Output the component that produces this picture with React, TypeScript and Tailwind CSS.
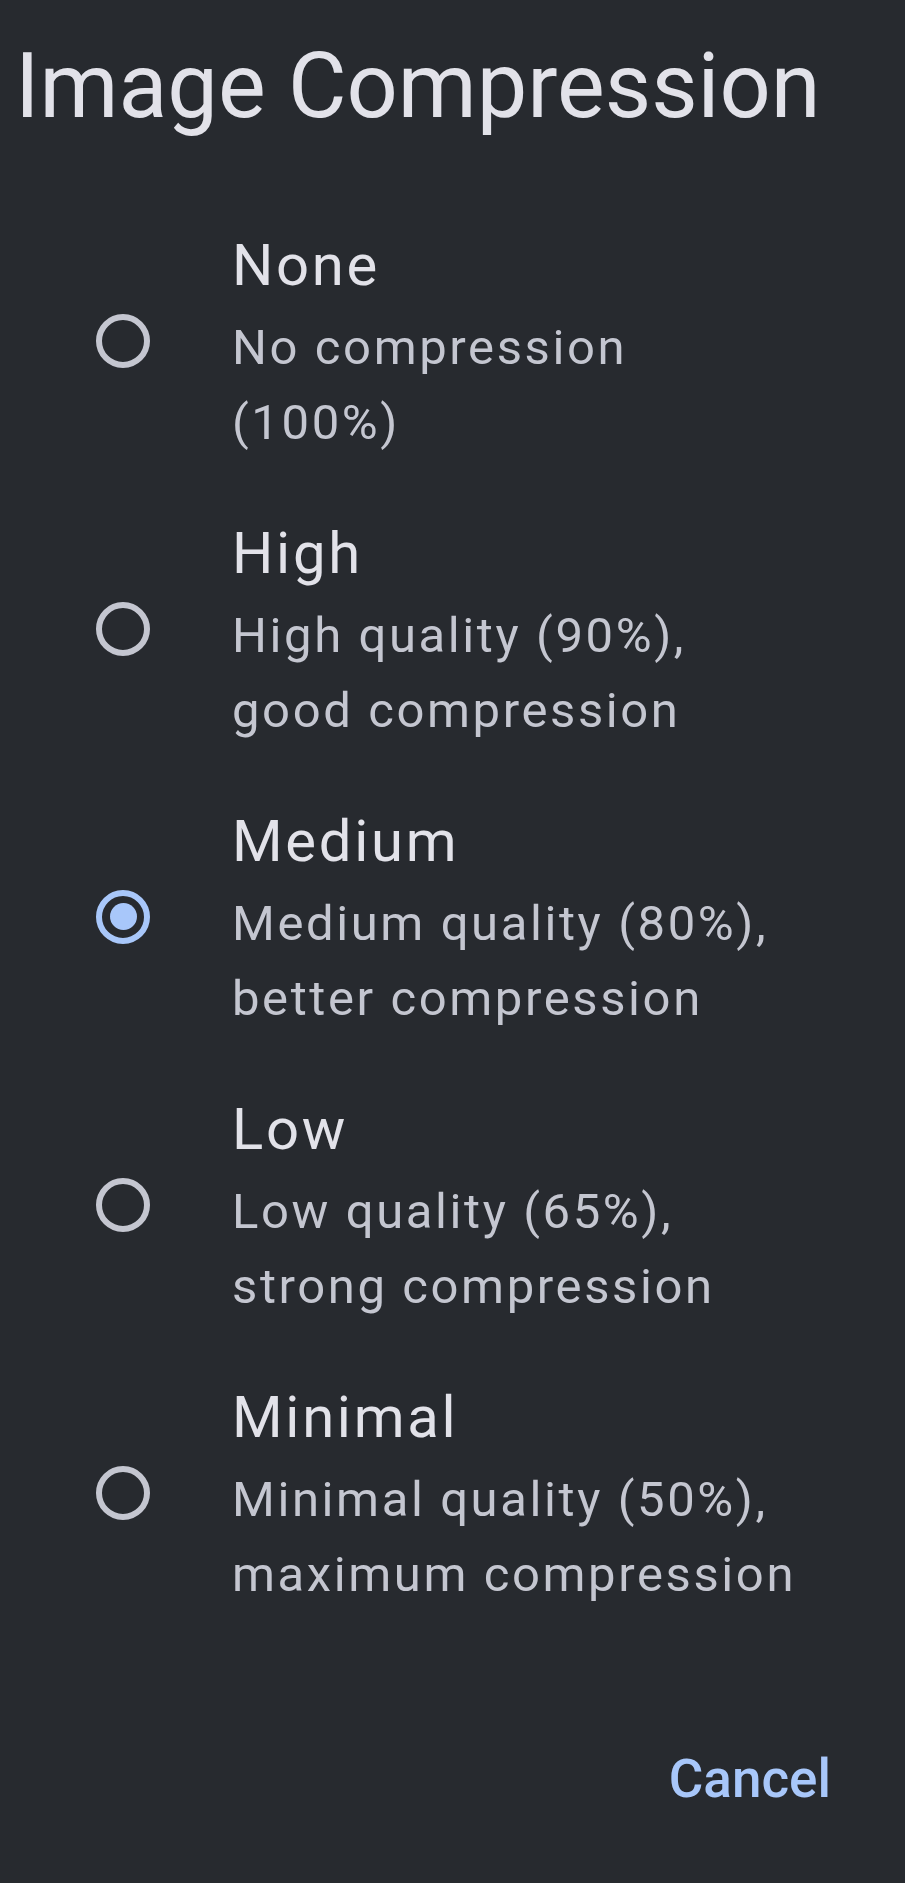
const options = [
  { label: "None", lines: ["No compression", "(100%)"] },
  { label: "High", lines: ["High quality (90%),", "good compression"] },
  { label: "Medium", lines: ["Medium quality (80%),", "better compression"] },
  { label: "Low", lines: ["Low quality (65%),", "strong compression"] },
  { label: "Minimal", lines: ["Minimal quality (50%),", "maximum compression"] },
];

function Radio({ checked }: { checked: boolean }) {
  if (checked) {
    return (
      <div className="w-[54px] h-[54px] rounded-full border-[6px] border-[#a8c7fa] flex items-center justify-center">
        <div className="w-[27px] h-[27px] rounded-full bg-[#a8c7fa]" />
      </div>
    );
  }
  return <div className="w-[54px] h-[54px] rounded-full border-[6px] border-[#c4c6d0]" />;
}

export default function App() {
  const selected = "Medium";
  return (
    <div
      className="w-[905px] h-[1883px] bg-[#272a2f] flex flex-col"
      style={{ fontFamily: "Roboto, 'Noto Sans', sans-serif" }}
    >
      <h1 className="pl-[15px] pt-[33px] text-[90px] leading-[108px] font-normal text-[#e2e2e9]">
        Image Compression
      </h1>

      <div className="mt-[80px] flex flex-col gap-[49px]">
        {options.map((o) => (
          <div key={o.label} className="flex items-center">
            <div className="w-[232px] flex justify-start pl-[96px]">
              <Radio checked={o.label === selected} />
            </div>
            <div className="flex flex-col">
              <div className="text-[58px] leading-[89px] tracking-[2.7px] text-[#e2e2e9]">{o.label}</div>
              {o.lines.map((l) => (
                <div key={l} className="text-[49px] leading-[75px] tracking-[2.6px] text-[#c4c6d0] whitespace-nowrap">
                  {l}
                </div>
              ))}
            </div>
          </div>
        ))}
      </div>

      <div className="flex justify-end pr-[74px] mt-[135px]">
        <button className="text-[53px] leading-[64px] font-medium text-[#a8c7fa]">Cancel</button>
      </div>
    </div>
  );
}
